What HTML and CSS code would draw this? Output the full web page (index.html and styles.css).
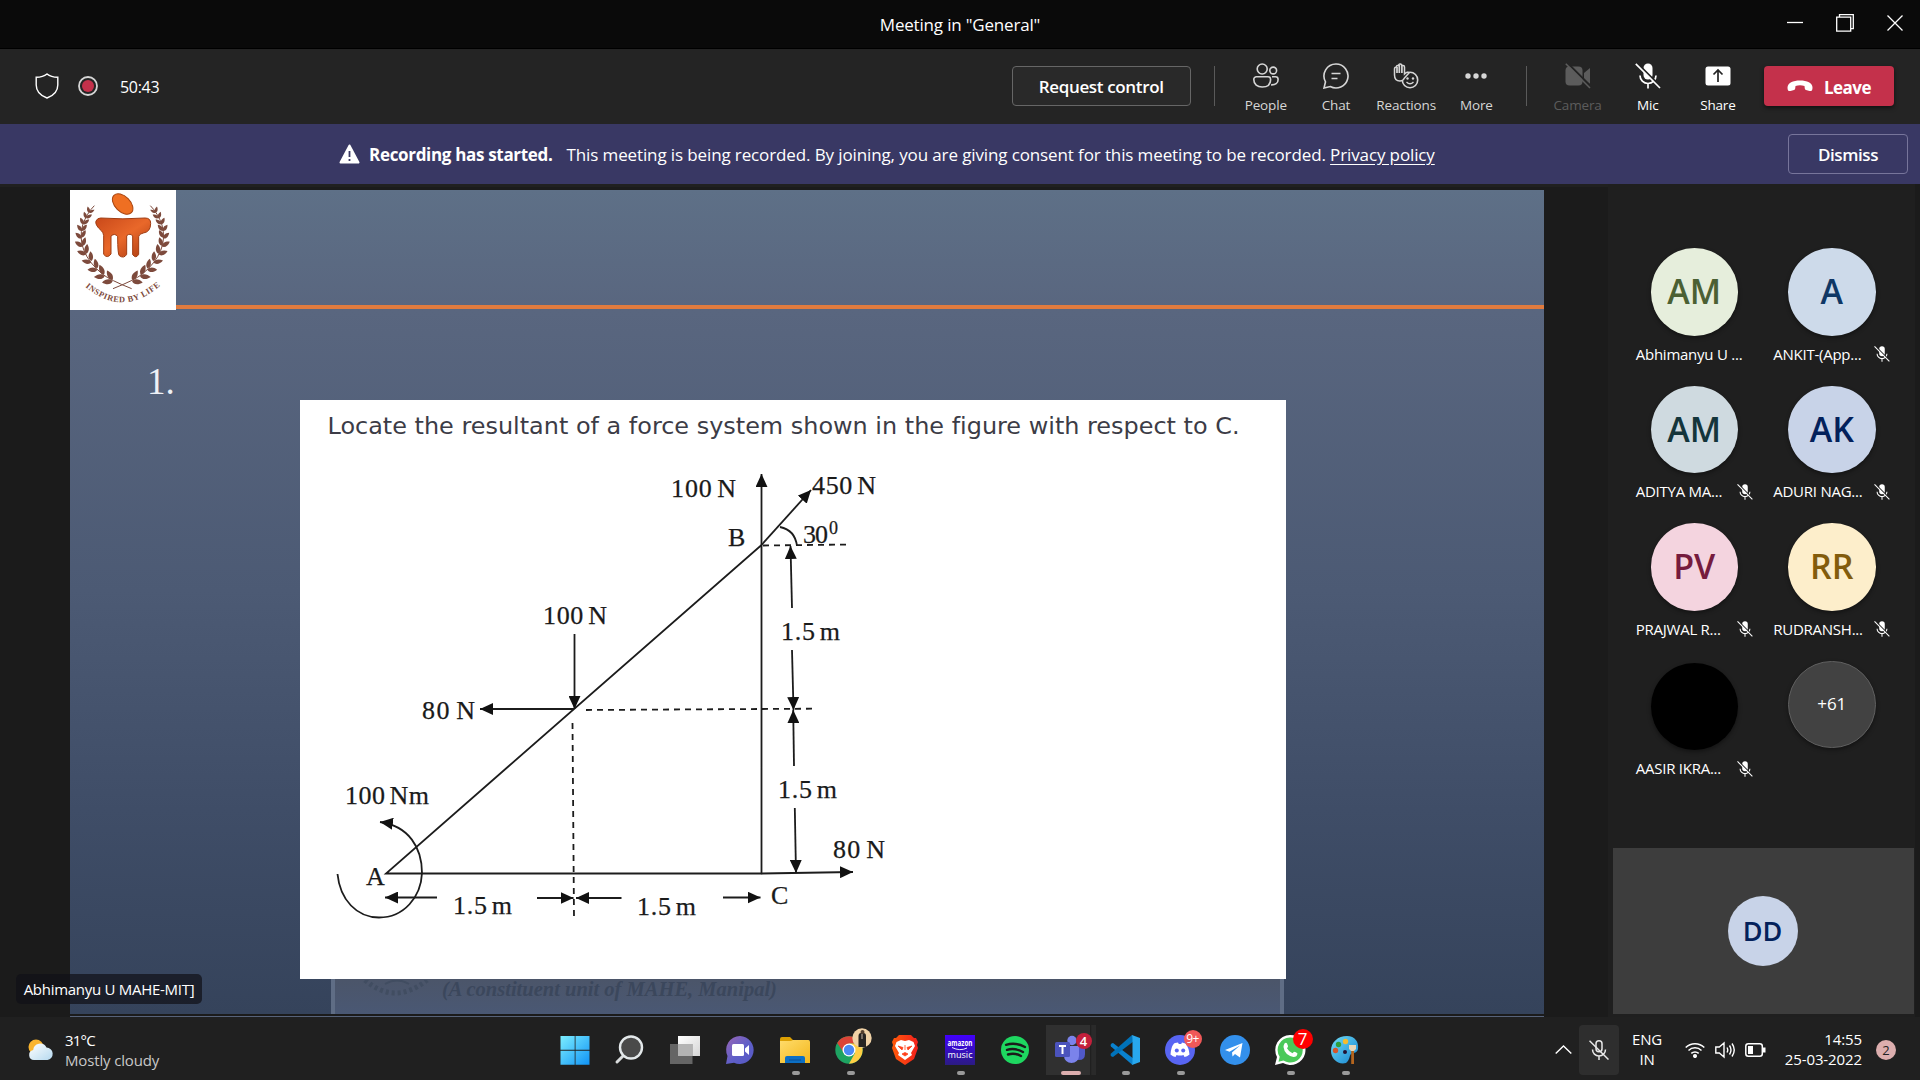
FILE: index.html
```html
<!DOCTYPE html>
<html lang="en">
<head>
<meta charset="utf-8">
<title>Meeting in "General"</title>
<link rel="stylesheet" href="styles.css">
</head>
<body>
<svg class="defs" width="0" height="0">
  <defs>
    <symbol id="mic-off" viewBox="0 0 26 26">
      <rect x="8.5" y="0.5" width="9" height="16" rx="4.5" fill="currentColor"/>
      <path d="M5 12.5a8 8 0 0 0 16 0M13 20.500v5" fill="none" stroke="currentColor" stroke-width="1.700"/>
      <path d="M2 0 26.500 24.500" stroke="var(--cut)" stroke-width="2"/>
      <path d="M0.800 0.800 25 25" stroke="currentColor" stroke-width="1.700"/>
    </symbol>
    <path id="leaf" d="M0 0C4 -11 17 -12 29 -5C20 5 8 7 0 0Z"/>
    <g id="branch" fill="#7d4a3c">
      <path d="M215 311Q150 285 128 268Q46 200 68 120Q80 85 103 62" fill="none" stroke="#7d4a3c" stroke-width="3"/>
      <use href="#leaf" transform="translate(158 288) rotate(-178) scale(1.100)"/>
      <use href="#leaf" transform="translate(158 284) rotate(-112) scale(1.100)"/>
      <use href="#leaf" transform="translate(134 273) rotate(-176) scale(1.100)"/>
      <use href="#leaf" transform="translate(132 269) rotate(-105) scale(1.100)"/>
      <use href="#leaf" transform="translate(112 254) rotate(-170)"/>
      <use href="#leaf" transform="translate(112 250) rotate(-95)"/>
      <use href="#leaf" transform="translate(94 232) rotate(-160)"/>
      <use href="#leaf" transform="translate(94 228) rotate(-85)"/>
      <use href="#leaf" transform="translate(79 208) rotate(-150)"/>
      <use href="#leaf" transform="translate(79 206) rotate(-75)"/>
      <use href="#leaf" transform="translate(69 184) rotate(-140) scale(.95)"/>
      <use href="#leaf" transform="translate(69 182) rotate(-65) scale(.9)"/>
      <use href="#leaf" transform="translate(65 160) rotate(-128) scale(.85)"/>
      <use href="#leaf" transform="translate(65 158) rotate(-52) scale(.85)"/>
      <use href="#leaf" transform="translate(66 138) rotate(-118) scale(.8)"/>
      <use href="#leaf" transform="translate(66 138) rotate(-42) scale(.8)"/>
      <use href="#leaf" transform="translate(71 118) rotate(-108) scale(.75)"/>
      <use href="#leaf" transform="translate(71 118) rotate(-32) scale(.75)"/>
      <use href="#leaf" transform="translate(79 100) rotate(-100) scale(.7)"/>
      <use href="#leaf" transform="translate(79 100) rotate(-25) scale(.7)"/>
      <use href="#leaf" transform="translate(88 83) rotate(-95) scale(.65)"/>
      <use href="#leaf" transform="translate(88 83) rotate(-20) scale(.6)"/>
    </g>
    <linearGradient id="orange" x1="0" y1="0" x2="1" y2="1"><stop offset="0" stop-color="#c9491a"/><stop offset=".5" stop-color="#e9682a"/><stop offset="1" stop-color="#a8380f"/></linearGradient>
    <linearGradient id="win" x1="0" y1="0" x2="1" y2="1"><stop offset="0" stop-color="#7ceeff"/><stop offset="1" stop-color="#1093f5"/></linearGradient>
    <linearGradient id="white" x1="0" y1="0" x2="1" y2="1"><stop offset="0" stop-color="#fff"/><stop offset="1" stop-color="#d5d5d5"/></linearGradient>
    <linearGradient id="violet" x1="0" y1="0" x2="1" y2="1"><stop offset="0" stop-color="#9a66b5"/><stop offset=".55" stop-color="#5f5fc8"/><stop offset="1" stop-color="#5558c4"/></linearGradient>
    <linearGradient id="yellow" x1="0" y1="0" x2="1" y2="1"><stop offset="0" stop-color="#ffdc6b"/><stop offset="1" stop-color="#f3b71c"/></linearGradient>
    <linearGradient id="brave" x1="0" y1="0" x2="1" y2="0"><stop offset="0" stop-color="#ff5a0a"/><stop offset="1" stop-color="#f2201c"/></linearGradient>
    <linearGradient id="amazon" x1="0" y1="0" x2="0" y2="1"><stop offset="0" stop-color="#4200ff"/><stop offset="1" stop-color="#2b1b82"/></linearGradient>
    <linearGradient id="paint" x1="0" y1="0" x2="1" y2="1"><stop offset="0" stop-color="#6fdcf5"/><stop offset="1" stop-color="#1583d0"/></linearGradient>
    <linearGradient id="cloud" x1="0" y1="0" x2="1" y2="1"><stop offset="0" stop-color="#fff"/><stop offset="1" stop-color="#b5d9ef"/></linearGradient>
  </defs>
</svg>

<header class="titlebar">
  <span></span>
  <h1 class="title">Meeting in "General"</h1>
  <div class="window-buttons">
    <svg width="16" height="18" viewBox="0 0 16 18"><path d="M0 8.500h16" stroke="#fff" stroke-width="1.300"/></svg>
    <svg width="18" height="18" viewBox="0 0 18 18" fill="none" stroke="#fff" stroke-width="1.300"><path d="M.7 3.200h14v14H.7z"/><path d="M3.500 3V.7H17.300V14.700H15"/></svg>
    <svg width="16" height="18" viewBox="0 0 16 18"><path d="M.5 1.500l15 15M15.500 1.500l-15 15" stroke="#fff" stroke-width="1.300"/></svg>
  </div>
</header>

<section class="toolbar">
  <div class="status">
    <svg class="shield" width="24" height="26" viewBox="0 0 24 26"><path d="M12 1C9 3.500 5.500 4.300 1.200 4.300V12C1.200 18.500 5 22.500 12 25C19 22.500 22.800 18.500 22.800 12V4.300C18.500 4.300 15 3.500 12 1Z" fill="none" stroke="#fff" stroke-width="1.400"/></svg>
    <svg class="rec" width="20" height="20" viewBox="0 0 20 20"><circle cx="10" cy="10" r="9" fill="none" stroke="#d6d6d6" stroke-width="1.800"/><circle cx="10" cy="10" r="6" fill="#c4314b"/></svg>
    <span class="timer">50:43</span>
  </div>
  <button class="request">Request control</button>
  <i class="divider first"></i>
  <div class="tool"><svg width="26" height="26" viewBox="0 0 26 26" fill="none" stroke="#d6d6d6" stroke-width="1.600"><circle cx="9.200" cy="6" r="5"/><circle cx="20.200" cy="7.500" r="3.400"/><path d="M3.500 13.800H15a2.600 2.600 0 0 1 2.600 2.600C17.600 21.500 14 24 9.200 24S.8 21.500.8 16.400a2.600 2.600 0 0 1 2.700-2.600ZM19 13.800h3.500a2.600 2.600 0 0 1 2.600 2.600c0 4-2.800 5.700-7 5.500"/></svg><span>People</span></div>
  <div class="tool"><svg width="26" height="26" viewBox="0 0 26 26" fill="none" stroke="#d6d6d6" stroke-width="1.600"><path d="M13 1A12 12 0 1 1 7.200 23.500L1 25L2.500 18.800A12 12 0 0 1 13 1ZM8.500 10.500h9M8.500 15.500h6"/></svg><span>Chat</span></div>
  <div class="tool"><svg width="26" height="26" viewBox="0 0 26 26"><circle cx="17" cy="17" r="7.700" fill="none" stroke="#d6d6d6" stroke-width="1.600"/><circle cx="14.500" cy="15.500" r="1.200" fill="#d6d6d6"/><circle cx="20" cy="15.500" r="1.200" fill="#d6d6d6"/><path d="M13.500 19q3.500 3.500 7 0" fill="none" stroke="#d6d6d6" stroke-width="1.400"/><path d="M1.500 6v6q0 6 5.500 6q3 0 4.500-3l4.500-5q-1.500-2-4.500 1V4q0-1.500-1.400-1.500T8.800 2Q8 .8 6.800 1T5.500 2.500Q3.500 2 3.500 4Q1.500 4 1.500 6Z" fill="#242424" stroke="#d6d6d6" stroke-width="1.500"/><path d="M4 4v6M6.300 2v8M8.900 2v8" stroke="#d6d6d6" stroke-width="1.700"/></svg><span>Reactions</span></div>
  <div class="tool"><svg width="26" height="26" viewBox="0 0 26 26" fill="#d6d6d6"><circle cx="5" cy="13" r="2.700"/><circle cx="13" cy="13" r="2.700"/><circle cx="21" cy="13" r="2.700"/></svg><span>More</span></div>
  <i class="divider second"></i>
  <div class="tool off"><svg width="26" height="26" viewBox="0 0 26 26"><rect x=".5" y="3.500" width="17" height="19" rx="4" fill="#5c5c5c"/><path d="M19 10l6-5v16l-6-4z" fill="#5c5c5c"/><path d="M2.500 0l24 24" stroke="#242424" stroke-width="2"/><path d="M.8.800 25 25" stroke="#5c5c5c" stroke-width="1.600"/></svg><span>Camera</span></div>
  <div class="tool on"><svg width="26" height="26"><use href="#mic-off"/></svg><span>Mic</span></div>
  <div class="tool on"><svg width="26" height="26" viewBox="0 0 26 26"><rect x=".5" y="3.500" width="25" height="19" rx="2.500" fill="#fff"/><path d="M13 19V7M8.500 11.500 13 7l4.500 4.500" fill="none" stroke="#242424" stroke-width="1.700"/></svg><span>Share</span></div>
  <button class="leave"><svg width="26" height="12" viewBox="0 0 26 12"><path d="M13 .5C20 .5 25.500 3 25.500 7.500C25.500 10.500 24.500 11.500 22.500 11L19 10C17.500 9.500 17.800 7.500 17.500 6Q13 4.500 8.500 6C8.200 7.500 8.500 9.500 7 10L3.500 11C1.500 11.500.5 10.500.5 7.500C.5 3 6 .5 13 .5Z" fill="#fff"/></svg><span>Leave</span></button>
</section>

<section class="banner">
  <svg width="21" height="20" viewBox="0 0 21 20"><path d="M10.500 1.500 19.500 18.500H1.500Z" fill="#fff" stroke="#fff" stroke-width="2" stroke-linejoin="round"/><path d="M10.500 7v6M10.500 15v2" stroke="#393864" stroke-width="1.800"/></svg>
  <strong>Recording has started.</strong>
  <p>This meeting is being recorded. By joining, you are giving consent for this meeting to be recorded. <a>Privacy policy</a></p>
  <button class="dismiss">Dismiss</button>
</section>

<main class="meeting">
  <section class="stage">
    <article class="slide">
      <header class="slide-head">
        <svg class="crest" width="106" height="120" viewBox="30 15 318 360">
          <use href="#branch"/>
          <use href="#branch" transform="translate(374 0) scale(-1 1)"/>
          <ellipse cx="188" cy="57" rx="23" ry="37" transform="rotate(-45 188 57)" fill="#ef6f22" stroke="#a8440f" stroke-width="3"/>
          <path d="M122 99Q189 104 255 99Q272 99 272 115Q272 141 250 144Q237 146 236 155V208Q228 222 218 209V153Q211 143 200 152V208Q192 222 178 212Q173 208 173 155Q165 143 153 153V207Q142 222 131 208V152Q130 142 124 137Q104 120 108 108Q112 99 122 99Z" fill="url(#orange)" stroke="#a03c12" stroke-width="3"/>
          <path id="motto-arc" d="M76 305Q187 401 302 301" fill="none"/>
          <text class="motto"><textPath href="#motto-arc" textLength="250">INSPIRED BY LIFE</textPath></text>
        </svg>
        <div class="rule"></div>
      </header>
      <div class="slide-body">
        <span class="number">1.</span>
        <svg class="problem" width="986" height="579" viewBox="300 400 986 579">
          <defs>
            <marker id="head" viewBox="0 0 12 11" refX="12" refY="5.500" markerWidth="13" markerHeight="12" markerUnits="userSpaceOnUse" orient="auto"><path d="M0 0 12 5.500 0 11Z" fill="#111"/></marker>
          </defs>
          <text class="question" x="327.500" y="433.500" textLength="912" lengthAdjust="spacingAndGlyphs">Locate the resultant of a force system shown in the figure with respect to C.</text>
          <g class="lines">
            <path d="M386 873.500H761.500V545Z"/>
            <path class="arrow" d="M761.500 545V474"/>
            <path class="arrow" d="M761.500 545 811 490"/>
            <path class="arrow" d="M574.500 634V709"/>
            <path class="arrow" d="M574 709H480"/>
            <path class="arrow" d="M761.500 873.500 853 872"/>
            <path class="arrow" d="M792 608 790.500 546"/>
            <path class="arrow" d="M792 650 793.500 710"/>
            <path class="arrow" d="M794 766 793.200 710"/>
            <path class="arrow" d="M794.800 808 796 873"/>
            <path class="arrow" d="M437 897.500H385"/>
            <path class="arrow" d="M537 898H573.500"/>
            <path class="arrow" d="M621.500 898H576"/>
            <path class="arrow" d="M723 897.500H760.500"/>
            <path class="arrow" d="M337.500 874C340 900 357 917.500 379 917.500C404 917.500 421 897 422 873C422 848 409 826 380 822"/>
            <path d="M780 527Q795 530 797 546"/>
            <path class="dash" d="M763 545.500 849 544.500M586 710 812 708.700M572.500 723 574 918"/>
          </g>
          <g class="labels">
            <text x="671" y="497" textLength="65">100 N</text>
            <text x="812" y="494" textLength="64">450 N</text>
            <text x="728" y="545.500" textLength="17">B</text>
            <text x="803" y="542.500" textLength="25">30</text>
            <text class="sup" x="829" y="534">0</text>
            <text x="543" y="624" textLength="64">100 N</text>
            <text x="422" y="719" textLength="53">80 N</text>
            <text x="781" y="639.500" textLength="59">1.5 m</text>
            <text x="778" y="798" textLength="59">1.5 m</text>
            <text x="833" y="857.500" textLength="52">80 N</text>
            <text x="345" y="804" textLength="84">100 Nm</text>
            <text x="366" y="885">A</text>
            <text x="771" y="903.500">C</text>
            <text x="453" y="914" textLength="59">1.5 m</text>
            <text x="637" y="915" textLength="59">1.5 m</text>
          </g>
        </svg>
      </div>
      <div class="ghost">
        <svg width="80" height="34" viewBox="0 0 80 34"><path d="M10 0Q40 26 72 0" fill="none" stroke="#414d61" stroke-width="5" stroke-dasharray="3 3"/><path d="M30 4q12-7 24 0" fill="none" stroke="#414d61" stroke-width="2"/></svg>
        <span>(A constituent unit of MAHE, Manipal)</span>
      </div>
    </article>
    <div class="slide-edge"></div>
    <div class="presenter">Abhimanyu U MAHE-MIT]</div>
  </section>

  <aside class="roster">
    <div class="people">
      <div class="person"><b class="avatar green">AM</b><div class="name"><span>Abhimanyu U ...</span></div></div>
      <div class="person"><b class="avatar sky">A</b><div class="name"><span>ANKIT-(App...</span><svg width="16" height="16"><use href="#mic-off"/></svg></div></div>
      <div class="person"><b class="avatar teal">AM</b><div class="name"><span>ADITYA MA...</span><svg width="16" height="16"><use href="#mic-off"/></svg></div></div>
      <div class="person"><b class="avatar blue">AK</b><div class="name"><span>ADURI NAG...</span><svg width="16" height="16"><use href="#mic-off"/></svg></div></div>
      <div class="person"><b class="avatar pink">PV</b><div class="name"><span>PRAJWAL R...</span><svg width="16" height="16"><use href="#mic-off"/></svg></div></div>
      <div class="person"><b class="avatar cream">RR</b><div class="name"><span>RUDRANSH...</span><svg width="16" height="16"><use href="#mic-off"/></svg></div></div>
      <div class="person low"><b class="avatar black"></b><div class="name"><span>AASIR IKRA...</span><svg width="16" height="16"><use href="#mic-off"/></svg></div></div>
      <div class="person"><b class="avatar more">+61</b></div>
    </div>
    <div class="self"><b class="avatar small blue">DD</b></div>
  </aside>
</main>

<footer class="taskbar">
  <div class="weather">
    <svg width="26" height="22" viewBox="0 0 26 22"><circle cx="8" cy="8" r="7.500" fill="#f9b42d"/><path d="M6 21a5 5 0 0 1-.8-9.900A7 7 0 0 1 18.500 8.500A6.300 6.300 0 0 1 19.500 21Z" fill="url(#cloud)"/></svg>
    <div><span class="temp">31°C</span><span class="sky-text">Mostly cloudy</span></div>
  </div>
  <nav class="apps">
    <div class="app"><svg viewBox="0 0 30 30"><path d="M.5 1h14.200v13.700H.5zM15.500 1h14v13.700H15.500zM.5 15.700h14.200v14H.5zM15.500 15.700h14v14H15.500z" fill="url(#win)"/></svg></div>
    <div class="app"><svg viewBox="0 0 30 30"><path d="M9.500 19.500 2 27" stroke="#d9dcdd" stroke-width="3" stroke-linecap="round"/><circle cx="16" cy="12.500" r="11" fill="#4a4a4a" stroke="#e3e8ea" stroke-width="2.400"/></svg></div>
    <div class="app"><svg viewBox="0 0 30 30"><path d="M8 1h22v20H8z" fill="url(#white)"/><path d="M0 9h22.500v20H0z" fill="#777" opacity=".8"/><path d="M8 9h14.500v12H8z" fill="#b3b3b3"/></svg></div>
    <div class="app"><svg viewBox="0 0 30 30"><path d="M15 1A14 14 0 1 1 9 27.800L1 29L2.500 21A14 14 0 0 1 15 1Z" fill="url(#violet)"/><rect x="7" y="9" width="12" height="12" rx="1.500" fill="#fff"/><path d="M20 13.500 24 10V20L20 16.500Z" fill="#fff"/></svg></div>
    <div class="app"><svg viewBox="0 0 30 30"><path d="M0 4Q0 2 2 2H10L13 5H28V12H0Z" fill="#dca003"/><path d="M0 6H11L13 5H28.500Q30 5 30 7V28H0Z" fill="url(#yellow)"/><path d="M5 28V23Q5 21 7 21H23Q25 21 25 23V28Z" fill="#0c6fc4"/><path d="M9 25h12" stroke="#084f96"/></svg><i></i></div>
    <div class="app"><svg viewBox="0 0 30 30"><circle cx="14" cy="15" r="13.700" fill="#1ea362"/><path d="M2.200 8A13.700 13.700 0 0 1 26 8.500H14L9 18Z" fill="#dc4437"/><path d="M26 8.500A13.700 13.700 0 0 1 14 28.700L20 18 14 8.500Z" fill="#ffce44"/><circle cx="14" cy="15" r="6.500" fill="#fff"/><circle cx="14" cy="15" r="5.200" fill="#4a8af4"/></svg><span class="profile"><svg viewBox="0 0 20 20"><circle cx="10" cy="10" r="9.700" fill="#f0d2a6"/><path d="M6.500 19V8Q6.500 5 9 5h2.500q2.500 0 2.500 3V19Z" fill="#262421"/><circle cx="10.500" cy="4" r="2" fill="#54402f"/><path d="M10 6v5" stroke="#c9b8a8"/></svg></span><i></i></div>
    <div class="app"><svg viewBox="0 0 30 30"><path d="M9 0H21L24 3H26L28 7 27 10 28 13 24 24 15 30 6 24 2 13 3 10 2 7 4 3H6Z" fill="url(#brave)"/><path d="M6.500 7 11 5 15 6 19 5 23.500 7 25 11 21 18 22 20 15 25 8 20 9 18 5 11Z" fill="#fff"/><path d="M8 11 13 12.500 12 15ZM22 11 17 12.500 18 15ZM15 10v5M12 19l3-1.500L18 19 15 21Z" fill="#ff411a" stroke="#ff411a" stroke-width=".8"/></svg></div>
    <div class="app"><svg viewBox="0 0 30 30"><path d="M0 0h30v30H0z" fill="url(#amazon)"/><text class="amz" x="2.500" y="11" textLength="25" lengthAdjust="spacingAndGlyphs">amazon</text><text class="mus" x="2.500" y="22.500" textLength="25" lengthAdjust="spacingAndGlyphs">music</text><path d="M7 12.500q8 4 15 .5" fill="none" stroke="#fff" stroke-width=".9"/></svg><i></i></div>
    <div class="app"><svg viewBox="0 0 30 30"><circle cx="15" cy="15" r="14" fill="#1ed760"/><path d="M6 9.800Q16 7 25 12M7 14.800Q15 12.500 23 17M8 19.500Q15 17.500 21 21" fill="none" stroke="#1b1b1b" stroke-width="2.400" stroke-linecap="round"/></svg></div>
    <div class="app active"><svg viewBox="0 0 30 30"><circle cx="26" cy="9" r="3.500" fill="#5059c9"/><path d="M20 11h10v8q0 6-6 6h-4z" fill="#5059c9"/><circle cx="17" cy="5.500" r="4.700" fill="#7b83eb"/><path d="M9 11H24V21A7.500 7 0 0 1 9 21Z" fill="#7b83eb"/><rect x="0" y="7" width="15" height="15" rx="1.500" fill="#4b53bc"/><path d="M4 11h7M7.500 11v8" stroke="#fff" stroke-width="2"/></svg><b class="badge crimson">4</b><i class="wide"></i></div>
    <div class="app"><svg viewBox="0 0 30 30"><path d="M3 8 24 24 22.500 30 1 11.500Q-.5 9 3 8Z" fill="#0a82cf"/><path d="M22 0 1 18.500Q-.5 21 3 22L24 6Z" fill="#0072b9"/><path d="M22 0 30 3V27L22 30Q22.500 29 22.500 26V4Z" fill="#28a8ee"/></svg><i></i></div>
    <div class="app"><svg viewBox="0 0 30 30"><circle cx="15" cy="15" r="15" fill="#5865f2"/><path d="M10 8 13 7.500 13.800 9H16.200L17 7.500 20.500 8.500Q24 13 24.500 19.500Q22 21.500 19.500 22L18.500 20Q15 21 11.500 20L10.500 22Q8 21.500 5.500 19.500Q6 12 9 8.500Z" fill="#fff"/><circle cx="11.800" cy="15.500" r="2" fill="#5865f2"/><circle cx="18.200" cy="15.500" r="2" fill="#5865f2"/></svg><b class="badge coral">9+</b><i></i></div>
    <div class="app"><svg viewBox="0 0 30 30"><circle cx="15" cy="15" r="15" fill="#3390ec"/><path d="M5 15 22.500 8 20 22.500 15 19 12.500 21.500 12 17.500 20 10.500 9.500 16.700Z" fill="#fff"/></svg></div>
    <div class="app"><svg viewBox="0 0 30 30"><path d="M15 0A15 15 0 1 1 8 28L0 30 2 22A15 15 0 0 1 15 0Z" fill="#fff"/><path d="M15 2.500A12.500 12.500 0 1 1 8.500 25.500L3.500 26.700 4.700 21.800A12.500 12.500 0 0 1 15 2.500Z" fill="#4ac959"/><path d="M9.500 8.500Q11 7 12 8.500L13 11Q13.200 12 12 13.200Q14 17 17.500 18.200L19 16.700Q21 16.800 22.500 18.500Q22 22 18.500 22Q9.500 20 8.500 12Q8.500 10 9.500 8.500Z" fill="#fff"/></svg><b class="badge red">7</b><i></i></div>
    <div class="app"><svg viewBox="0 0 30 30"><path d="M17 1C25 1 29 7 28 14C27 19 23 17 21 19C19 21 20 25 16 28C8 30 1 24 1 16C1 7 8 1 17 1Z" fill="url(#paint)"/><circle cx="15.500" cy="6.500" r="2.700" fill="#f5bc2d"/><circle cx="8.500" cy="9.500" r="2.700" fill="#2f9d3a"/><circle cx="5.500" cy="15.500" r="2.700" fill="#d4552b"/><circle cx="15" cy="17" r="2" fill="#213"/><path d="M19 10h7v4l-2 2h-3l-2-2z" fill="#ead7b8"/><path d="M21.200 16h2.800v13h-2.800z" fill="#b5651d"/></svg><i></i></div>
  </nav>
  <div class="tray">
    <svg class="chevron" width="17" height="9" viewBox="0 0 17 9"><path d="M.7 8.500 8.500 1 16.300 8.500" fill="none" stroke="#fff" stroke-width="1.400"/></svg>
    <span class="mic-tile"><svg width="20" height="20" viewBox="0 0 20 20" fill="none" stroke="#e8e8e8" stroke-width="1.500"><rect x="7" y=".8" width="6" height="11" rx="3"/><path d="M3.500 9.500a6.500 6.500 0 0 0 13 0M10 16v4M.5.800 19.500 19.500"/></svg></span>
    <span class="lang">ENG<br>IN</span>
    <svg class="wifi" width="20" height="16" viewBox="0 0 20 16" fill="none" stroke="#fff" stroke-width="1.500"><path d="M.7 5.500a13.300 13.300 0 0 1 18.600 0M3.500 8.500a9.300 9.300 0 0 1 13 0M6.300 11.400a5.300 5.300 0 0 1 7.400 0"/><circle cx="10" cy="14" r="1.300" fill="#fff"/></svg>
    <svg class="sound" width="21" height="18" viewBox="0 0 21 18" fill="none" stroke="#fff" stroke-width="1.400"><path d="M.8 6v6h3.500L9 16V2L4.300 6ZM12 6.500q1.500 2.500 0 5M14.500 4.500q3 4.500 0 9M17 2.500q4.500 6.500 0 13"/></svg>
    <svg class="battery" width="21" height="14" viewBox="0 0 21 14"><rect x=".8" y=".8" width="16.500" height="12.400" rx="2.500" fill="none" stroke="#fff" stroke-width="1.500"/><path d="M3 3h5v8H3zM18 4.500h2.500v5H18z" fill="#fff"/></svg>
    <span class="clock">14:55<br>25-03-2022</span>
    <span class="count">2</span>
  </div>
</footer>
</body>
</html>
```
FILE: styles.css
```css
* { box-sizing: border-box; margin: 0; padding: 0; }
body {
  width: 1920px; height: 1080px; overflow: hidden;
  display: flex; flex-direction: column;
  background: #1b1b1b; color: #fff;
  font-family: "Open Sans", "Noto Sans", sans-serif;
}
svg { display: block; flex: none; }
button { font: inherit; color: inherit; }
.defs { position: absolute; }

.titlebar {
  height: 49px; flex: none; background: #0a0a0a; border-bottom: 1px solid #000;
  display: grid; grid-template-columns: 1fr auto 1fr; align-items: center;
}
.title { font-size: 17px; font-weight: 400; letter-spacing: -.18px; padding-top: 1px; }
.window-buttons { display: flex; justify-content: flex-end; gap: 33px; padding-right: 17px; margin-top: -2px; }

.toolbar { height: 75px; flex: none; background: #242424; display: flex; align-items: center; padding-right: 26px; --cut: #242424; }
.status { display: flex; align-items: center; flex: 1; margin-top: -1px; }
.shield { margin-left: 35px; }
.rec { margin-left: 19px; }
.timer { margin-left: 22px; font-size: 16px; letter-spacing: -.3px; margin-top: 2px; }
.request {
  width: 179px; height: 40px; border: 1px solid #666; border-radius: 4px; background: #292929; margin-top: -2px;
  font-size: 17px; font-weight: 600; letter-spacing: -.35px; padding-top: 2px;
}
.divider { width: 1px; height: 40px; background: #5a5a5a; margin-top: -2px; }
.divider.first { margin: -2px 16px 0 23px; }
.divider.second { margin: -2px 15px 0; }
.tool { width: 70.200px; display: flex; flex-direction: column; align-items: center; gap: 6px; color: #d6d6d6; font-size: 13.500px; line-height: 20px; letter-spacing: -.15px; padding-top: 5px; }
.tool.off { color: #5c5c5c; }
.tool.on { color: #fff; }
.leave {
  width: 130px; height: 40px; margin: -2px 0 0 11px; border: 0; border-radius: 4px; background: #c4314b;
  display: flex; align-items: center; justify-content: center; gap: 11px;
  font-size: 17px; font-weight: 700; letter-spacing: -.55px; box-shadow: 0 2px 4px #0008;
}
.leave span { padding-top: 3px; }

.banner { height: 60px; flex: none; background: #393864; display: flex; align-items: center; padding: 0 12px 0 339px; font-size: 17px; }
.banner strong { margin-left: 9px; font-weight: 700; letter-spacing: -.32px; padding-top: 1px; }
.banner p { margin-left: 14px; flex: 1; letter-spacing: -.12px; white-space: nowrap; padding-top: 1px; }
.banner a { text-decoration: underline; text-underline-offset: 3px; }
.dismiss { width: 120px; height: 40px; border: 1px solid #77759b; border-radius: 4px; background: transparent; font-size: 17px; font-weight: 600; letter-spacing: -.4px; }

.meeting { flex: 1; min-height: 0; display: flex; }
.stage { width: 1608px; padding: 3px 0 0 70px; position: relative; background: #1b1b1b; border-top: 3px solid #202020; }
.slide {
  width: 1474px; height: 824px; overflow: hidden;
  background: linear-gradient(#5e7087 0, #59667f 120px, #4c5a74 400px, #3f4d67 620px, #35435b 824px);
}
.slide-head { display: flex; height: 120px; }
.crest { background: #fff; }
.motto { font: 700 25px "Liberation Serif", serif; fill: #7d4a3c; }
.rule { flex: 1; border-bottom: 4px solid #e07b3f; margin-bottom: 1px; }
.slide-body { display: grid; grid-template-columns: 230px 986px; height: 669px; align-items: start; }
.number { font: 37px/44px "Liberation Serif", serif; color: #eef1f6; padding: 50px 0 0 77px; }
.problem { margin-top: 90px; background: #fff; }
.question { font: 22.500px "DejaVu Sans", sans-serif; font-variant-ligatures: none; fill: #3c3c46; }
.lines { fill: none; stroke: #1c1c1c; stroke-width: 1.800; }
.arrow { marker-end: url(#head); }
.dash { stroke-dasharray: 6 5; }
.labels { font: 26px "Liberation Serif", serif; word-spacing: -3px; fill: #1a1a1a; stroke: #1a1a1a; stroke-width: .25px; }
.sup { font-size: 18px; }
.ghost {
  width: 953px; height: 35px; margin-left: 261px; border: solid #5f6d85; border-width: 0 4px;
  background: linear-gradient(#4b5569, #4a5874); display: flex; align-items: center;
}
.ghost svg { margin-left: 20px; }
.ghost span { margin: -15px 0 0 7px; font: italic 700 20.500px/24px "Liberation Serif", serif; color: #3b475c; white-space: nowrap; }
.slide-edge { width: 1474px; height: 1px; margin-top: 2px; background: #56627a; }
.presenter {
  position: absolute; left: 16px; bottom: 13px; width: 186px; height: 30px; border-radius: 5px;
  background: #111118b8; font-size: 15px; line-height: 30px; text-align: center; white-space: nowrap; letter-spacing: -.28px;
}

.roster { width: 312px; background: #1f1f1f; border-right: 5px solid #1b1b1b; padding: 64px 0 0 5px; display: flex; flex-direction: column; justify-content: space-between; --cut: #1f1f1f; }
.people { display: grid; grid-template-columns: 137.500px 137.500px; grid-auto-rows: 137.500px; padding-left: 12.500px; }
.person { display: flex; flex-direction: column; align-items: center; }
.person.low { padding-top: 2px; }
.avatar {
  width: 87.500px; height: 87.500px; border-radius: 50%; display: flex; align-items: center; justify-content: center;
  font-size: 34px; font-weight: 600; line-height: 44px; padding-bottom: 1px; box-shadow: 0 2px 4px #0006; flex: none;
}
.avatar.green { background: #e6eedc; color: #4b6033; }
.avatar.sky { background: #cddaea; color: #0f3765; }
.avatar.teal { background: #cfdae0; color: #14353b; }
.avatar.blue { background: #c8d3e8; color: #03215b; }
.avatar.pink { background: #f4d4df; color: #761b3e; }
.avatar.cream { background: #fdeecb; color: #835c0c; }
.avatar.black { background: #000; }
.avatar.more { background: #424242; border: 1px solid #606060; font-size: 17px; font-weight: 400; }
.avatar.small { width: 70px; height: 70px; font-size: 27px; box-shadow: none; }
.name { width: 117px; height: 20px; margin-top: 8.500px; display: flex; align-items: center; justify-content: space-between; font-size: 15px; white-space: nowrap; letter-spacing: -.25px; }
.name span { margin-top: -1px; }
.self { width: 301px; height: 166px; margin-bottom: 3px; background: #3d3d3d; display: flex; align-items: center; justify-content: center; padding-right: 2px; }

.taskbar { height: 63px; flex: none; background: #202020; display: flex; align-items: center; justify-content: space-between; padding-top: 2px; }
.weather { width: 548px; padding-left: 28px; display: flex; align-items: center; gap: 11px; font-size: 15px; line-height: 20px; letter-spacing: -.15px; }
.weather > div { padding-top: 1px; }
.weather span { display: block; }
.sky-text { color: #c8c8c8; }
.weather .temp { letter-spacing: -.8px; }
.apps { display: flex; flex: none; margin-left: -1px; }
.app { width: 55px; height: 50px; display: flex; align-items: center; justify-content: center; position: relative; }
.app > svg { width: 30px; height: 30px; overflow: visible; }
.app > i { position: absolute; bottom: 0; left: 24px; width: 8px; height: 4px; border-radius: 2px; background: #9a9a9a; }
.app > i.wide { width: 20px; left: 18px; background: #dcaeae; }
.app.active { background: linear-gradient(90deg, #303030 44px, #1d1d1d 44px, #2a2a2a 46px) no-repeat 3px 0 / 50px 50px; }
.profile { position: absolute; right: 6px; top: 3px; width: 20px; height: 20px; }
.badge { position: absolute; right: 6px; top: 8px; width: 16px; height: 16px; border-radius: 50%; font-size: 13px; font-weight: 600; line-height: 16px; text-align: center; }
.badge.crimson { background: #c4203c; }
.badge.coral { right: 6px; top: 5px; width: 18px; height: 18px; font-size: 12px; line-height: 17px; background: #f05858; font-weight: 400; letter-spacing: -.5px; }
.badge.red { right: 5px; top: 4px; width: 20px; height: 20px; line-height: 20px; background: #f00; font-size: 17px; font-weight: 400; }
.amz { font: 700 8px "Open Sans", sans-serif; fill: #fff; }
.mus { font: 9px "Open Sans", sans-serif; fill: #fff; }

.tray { width: 547px; display: flex; align-items: center; justify-content: flex-end; padding-right: 24px; font-size: 15px; line-height: 20px; }
.mic-tile { width: 40px; height: 50px; margin-left: 7px; border-radius: 4px; background: #2e2e2e; display: flex; align-items: center; justify-content: center; }
.lang { width: 56px; text-align: center; letter-spacing: -.2px; margin-top: -1px; }
.wifi { margin-left: 10px; }
.sound { margin-left: 10px; }
.battery { margin-left: 9px; }
.clock { width: 96px; text-align: right; letter-spacing: -.1px; margin-top: -1px; }
.count { width: 20px; height: 20px; margin-left: 14px; border-radius: 50%; background: #dcaeae; color: #222; font-size: 13px; text-align: center; }
```
